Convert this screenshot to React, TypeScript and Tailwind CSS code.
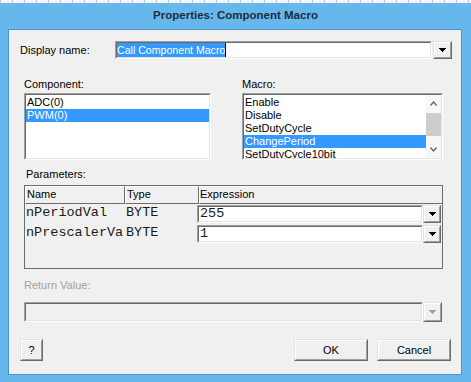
import React from "react";

const SANS = "font-['Liberation_Sans',Arial,sans-serif]";
const MONO = "font-['Liberation_Mono','Courier_New',monospace]";

function Arrow({ color = "#000000" }: { color?: string }) {
  return (
    <svg width="7" height="4" viewBox="0 0 7 4" shapeRendering="crispEdges">
      <rect x="0" y="0" width="7" height="1" fill={color} />
      <rect x="1" y="1" width="5" height="1" fill={color} />
      <rect x="2" y="2" width="3" height="1" fill={color} />
      <rect x="3" y="3" width="1" height="1" fill={color} />
    </svg>
  );
}

function Chevron({ up }: { up?: boolean }) {
  return (
    <svg width="7" height="5" viewBox="0 0 7 5">
      <polyline
        points={up ? "0.5,4.5 3.5,1 6.5,4.5" : "0.5,0.5 3.5,4 6.5,0.5"}
        fill="none"
        stroke="#606060"
        strokeWidth="1.2"
      />
    </svg>
  );
}

function Sunken({
  className = "",
  inner = "",
  children,
}: {
  className?: string;
  inner?: string;
  children?: React.ReactNode;
}) {
  return (
    <div
      className={`border border-t-[#a0a0a0] border-l-[#a0a0a0] border-r-white border-b-white ${className}`}
    >
      <div
        className={`h-full w-full border border-t-[#696969] border-l-[#696969] border-r-[#e3e3e3] border-b-[#e3e3e3] ${inner}`}
      >
        {children}
      </div>
    </div>
  );
}

function Raised({
  className = "",
  children,
}: {
  className?: string;
  children?: React.ReactNode;
}) {
  return (
    <div
      className={`border border-t-[#e3e3e3] border-l-[#e3e3e3] border-r-[#696969] border-b-[#696969] bg-[#f0f0f0] ${className}`}
    >
      <div className="flex h-full w-full items-center justify-center border border-t-white border-l-white border-r-[#a0a0a0] border-b-[#a0a0a0]">
        {children}
      </div>
    </div>
  );
}

function ListItem({
  text,
  selected,
}: {
  text: string;
  selected?: boolean;
}) {
  return (
    <div
      className={`h-[13px] whitespace-nowrap pl-[1px] leading-[13px] ${
        selected ? "bg-[#3399ff] text-white" : "text-black"
      }`}
    >
      {text}
    </div>
  );
}

export default function App() {
  return (
    <div
      className={`relative flex h-[382px] w-[471px] flex-col overflow-hidden bg-[#66b8ec] ${SANS}`}
    >
      <div className="h-[3px] w-full bg-[repeating-linear-gradient(90deg,#c3c9ce_0px,#c3c9ce_1px,#f3f5f7_1px,#f3f5f7_12px)]" />
      <div className="flex h-[26px] items-center justify-center text-[11.5px] font-bold text-[#1e2c3a]">
        Properties: Component Macro
      </div>
      <div className="mb-[7px] ml-[8px] mr-[9px] flex flex-1 flex-col border border-[#4c94cc] bg-[#f0f0f0] text-[11px] text-black">
        {/* Display name row */}
        <div className="mt-[11px] flex h-[18px] items-center">
          <div className="ml-[11px] w-[95px] leading-[13px]">Display name:</div>
          <Sunken className="h-[18px] w-[317px] bg-white" inner="flex items-center">
            <span className="h-full whitespace-nowrap bg-[#3399ff] text-[10.6px] leading-[14px] text-white">
              Call Component Macro
            </span>
            <span className="h-full w-px bg-black" />
          </Sunken>
          <Raised className="ml-[1px] h-[18px] w-[19px]">
            <Arrow />
          </Raised>
        </div>

        {/* Component / Macro lists */}
        <div className="ml-[15px] mt-[19px] flex gap-[31px]">
          <div className="w-[187px]">
            <div className="h-[13px] leading-[13px]">Component:</div>
            <Sunken className="mt-[2px] h-[67px] bg-white" inner="pt-[1px]">
              <ListItem text="ADC(0)" />
              <ListItem text="PWM(0)" selected />
            </Sunken>
          </div>
          <div className="w-[201px]">
            <div className="h-[13px] leading-[13px]">Macro:</div>
            <Sunken className="mt-[2px] h-[67px] bg-white" inner="flex overflow-hidden">
              <div className="flex-1 overflow-hidden pt-[1px]">
                <ListItem text="Enable" />
                <ListItem text="Disable" />
                <ListItem text="SetDutyCycle" />
                <ListItem text="ChangePeriod" selected />
                <ListItem text="SetDutyCycle10bit" />
              </div>
              <div className="flex w-[15px] flex-col bg-[#f7f7f7]">
                <div className="flex h-[17px] items-center justify-center">
                  <Chevron up />
                </div>
                <div className="flex-1">
                  <div className="mt-[1px] h-[23px] w-full bg-[#cdcdcd]" />
                </div>
                <div className="flex h-[17px] items-center justify-center">
                  <Chevron />
                </div>
              </div>
            </Sunken>
          </div>
        </div>

        {/* Parameters */}
        <div className="ml-[17px] mt-[8px] h-[13px] leading-[13px]">Parameters:</div>
        <div className="ml-[15px] mt-[4px] h-[84px] w-[419px] border border-[#6d6d6d] bg-[#f0f0f0]">
          <div className="flex h-[18px]">
            <div className="w-[100px] border-b border-r border-t border-l border-t-white border-l-white border-b-[#6d6d6d] border-r-[#6d6d6d] pl-[1px] leading-[15px]">
              Name
            </div>
            <div className="w-[74px] border-b border-r border-t border-l border-t-white border-l-white border-b-[#6d6d6d] border-r-[#6d6d6d] pl-[1px] leading-[15px]">
              Type
            </div>
            <div className="flex-1 border-b border-t border-l border-t-white border-l-white border-b-[#6d6d6d] pl-0 leading-[15px]">
              Expression
            </div>
          </div>
          {[
            ["nPeriodVal", "BYTE", "255"],
            ["nPrescalerVa", "BYTE", "1"],
          ].map(([n, t, v]) => (
            <div key={n} className={`flex h-[20px] ${MONO} text-[13.5px] text-[#1a1a1a]`}>
              <div className="w-[100px] overflow-hidden whitespace-nowrap pl-[1px] leading-[18px]">
                {n}
              </div>
              <div className="w-[72px] whitespace-nowrap pl-[1px] leading-[18px]">{t}</div>
              <div className="flex pt-[1px]">
                <Sunken className="h-[18px] w-[226px] bg-white" inner="pl-[1px] leading-[14px]">
                  {v}
                </Sunken>
                <Raised className="h-[18px] w-[18px]">
                  <Arrow />
                </Raised>
              </div>
            </div>
          ))}
        </div>

        {/* Return value */}
        <div className="ml-[15px] mt-[10px] h-[13px] leading-[13px] text-[#a0a0a0]">
          Return Value:
        </div>
        <div className="ml-[15px] mt-[10px] flex h-[20px]">
          <Sunken className="h-[20px] w-[399px] bg-[#f0f0f0]" />
          <Raised className="h-[20px] w-[19px]">
            <Arrow color="#a0a0a0" />
          </Raised>
        </div>

        {/* Buttons */}
        <div className="mt-[17px] flex h-[22px]">
          <Raised className="ml-[11px] h-[22px] w-[23px]">?</Raised>
          <div className="flex-1" />
          <Raised className="h-[22px] w-[74px]">OK</Raised>
          <Raised className="ml-[9px] mr-[10px] h-[22px] w-[74px]">Cancel</Raised>
        </div>
      </div>
    </div>
  );
}
